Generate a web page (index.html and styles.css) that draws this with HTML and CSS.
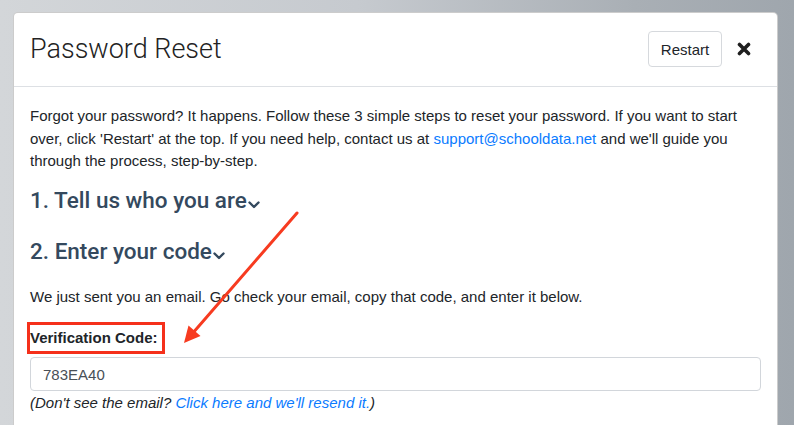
FILE: index.html
```html
<!DOCTYPE html>
<html>
  <head>
    <title>Password Reset</title>
    <link rel="stylesheet" href="styles.css">
  </head>
  <body>
    <div class="modal">
      <div class="modal-header">
        <h2 class="modal-title">Password Reset</h2>
        <button class="restart-button" type="button">Restart</button>
        <button class="close-button" type="button" aria-label="Close">
          <svg width="14" height="14" viewBox="0 0 14 14">
            <path d="M2.5 2.5 L11.5 11.5 M11.5 2.5 L2.5 11.5" stroke="#1f1f1f" stroke-width="3.6" stroke-linecap="round"/>
          </svg>
        </button>
      </div>
      <div class="modal-body">
        <p class="intro">Forgot your password? It happens. Follow these 3 simple steps to reset your password. If you want to start over, click 'Restart' at the top. If you need help, contact us at <a href="#">support@schooldata.net</a> and we'll guide you through the process, step-by-step.</p>

        <h3 class="step">1. Tell us who you are<svg class="chevron" width="12" height="8" viewBox="0 0 12 8"><path d="M1.5 1.5 L6 6 L10.5 1.5" fill="none" stroke="#34495e" stroke-width="2.4" stroke-linecap="round" stroke-linejoin="round"/></svg></h3>

        <h3 class="step">2. Enter your code<svg class="chevron" width="12" height="8" viewBox="0 0 12 8"><path d="M1.5 1.5 L6 6 L10.5 1.5" fill="none" stroke="#34495e" stroke-width="2.4" stroke-linecap="round" stroke-linejoin="round"/></svg></h3>

        <p class="step-text">We just sent you an email. Go check your email, copy that code, and enter it below.</p>

        <div class="form-group">
          <label class="code-label" for="code">Verification Code:</label>
          <input class="code-input" type="text" id="code" value="783EA40">
          <p class="resend"><em>(Don't see the email? <a href="#">Click here and we'll resend it.</a>)</em></p>
        </div>

        <!-- annotation arrow pointing at the label -->
        <svg class="arrow" width="124" height="144" viewBox="178 205 124 144">
          <line x1="297" y1="212" x2="192" y2="333" stroke="#f73b20" stroke-width="3" stroke-linecap="round"/>
          <polygon points="184,342 188.5,324.5 200.5,335" fill="#f73b20"/>
        </svg>
      </div>
    </div>
  </body>
</html>
```

FILE: styles.css
```css
html, body {
  height: 100%;
}

body {
  margin: 0;
  padding: 12px 16px 0 13px;
  box-sizing: border-box;
  overflow: hidden;
  font-family: "Liberation Sans", Arial, sans-serif;
  font-size: 15px;
  line-height: 1.5;
  color: #212529;
  background: linear-gradient(90deg, #d3d6d9 0%, #c6cacf 45%, #a9afb5 80%, #9fa6ad 100%);
}

a {
  color: #0a7bff;
  text-decoration: none;
}

.modal {
  width: 765px;
  height: 460px;
  box-sizing: border-box;
  background: #fff;
  border: 1px solid rgba(0, 0, 0, 0.2);
  border-radius: 5px;
}

.modal-header {
  display: flex;
  align-items: center;
  padding: 18px 26px 19px 16px;
  border-bottom: 1px solid #dde0e4;
}

.modal-title {
  flex: 1;
  margin: 0;
  font-family: Roboto, "Liberation Sans", sans-serif;
  font-weight: 300;
  font-size: 27px;
  line-height: 36px;
  color: #222;
}

.restart-button {
  height: 36px;
  width: 74px;
  padding: 0;
  background: #fff;
  border: 1px solid #d6d9dd;
  border-radius: 4px;
  font-family: "Liberation Sans", Arial, sans-serif;
  font-size: 15px;
  color: #212529;
}

.close-button {
  display: flex;
  margin-left: 15px;
  padding: 0;
  border: none;
  background: none;
}

.modal-body {
  position: relative;
  padding: 18px 16px 0 16px;
}

.intro {
  margin: 0;
}

.step {
  margin: 12px 0 0 0;
  font-family: Roboto, "Liberation Sans", sans-serif;
  font-size: 22.5px;
  line-height: 30px;
  font-weight: 500;
  color: #34495e;
}

.step + .step {
  margin-top: 21px;
}

.chevron {
  margin-left: 1px;
  vertical-align: -1px;
}

.step-text {
  margin: 20px 0 0 0;
}

.form-group {
  display: flex;
  flex-direction: column;
  align-items: flex-start;
  margin-top: 17px;
}

.code-label {
  font-weight: bold;
  line-height: 26px;
  padding-right: 4px;
  outline: 3px solid #f5301b;
}

.code-input {
  margin-top: 6px;
  width: 100%;
  height: 34px;
  box-sizing: border-box;
  padding: 0 12px;
  border: 1px solid #d2d6db;
  border-radius: 4px;
  font-family: "Liberation Sans", Arial, sans-serif;
  font-size: 15px;
  color: #495057;
}

.resend {
  margin: 1px 0 0 0;
}

.arrow {
  position: absolute;
  left: 164px;
  top: 119px;
  pointer-events: none;
}
```
